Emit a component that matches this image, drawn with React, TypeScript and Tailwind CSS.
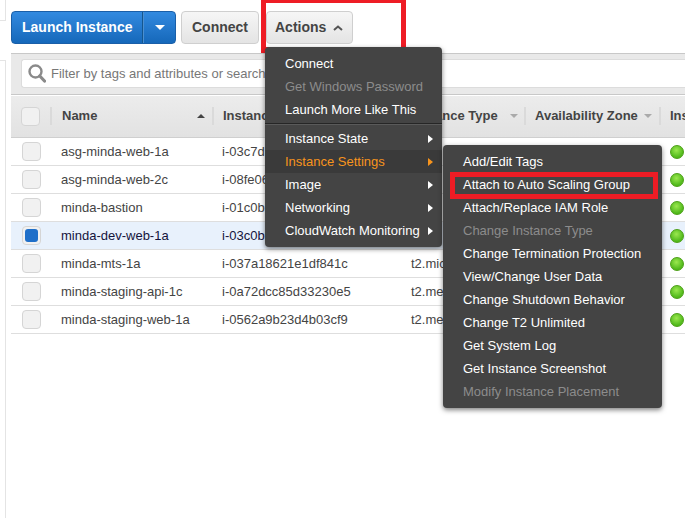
import React from "react";

const rows = [
  { name: "asg-minda-web-1a", id: "i-03c7d", type: "" },
  { name: "asg-minda-web-2c", id: "i-08fe06", type: "" },
  { name: "minda-bastion", id: "i-01c0b", type: "" },
  { name: "minda-dev-web-1a", id: "i-03c0b", type: "", selected: true },
  { name: "minda-mts-1a", id: "i-037a18621e1df841c", type: "t2.micro" },
  { name: "minda-staging-api-1c", id: "i-0a72dcc85d33230e5", type: "t2.medium" },
  { name: "minda-staging-web-1a", id: "i-0562a9b23d4b03cf9", type: "t2.medium" },
];

const actionItems = [
  { label: "Connect" },
  { label: "Get Windows Password", disabled: true },
  { label: "Launch More Like This" },
];

const subMenus = [
  { label: "Instance State" },
  { label: "Instance Settings", active: true },
  { label: "Image" },
  { label: "Networking" },
  { label: "CloudWatch Monitoring" },
];

const settingsItems = [
  { label: "Add/Edit Tags" },
  { label: "Attach to Auto Scaling Group" },
  { label: "Attach/Replace IAM Role" },
  { label: "Change Instance Type", disabled: true },
  { label: "Change Termination Protection" },
  { label: "View/Change User Data" },
  { label: "Change Shutdown Behavior" },
  { label: "Change T2 Unlimited" },
  { label: "Get System Log" },
  { label: "Get Instance Screenshot" },
  { label: "Modify Instance Placement", disabled: true },
];

const Checkbox = ({ checked }: { checked?: boolean }) => (
  <div className="w-[19px] h-[19px] shrink-0 rounded-[4px] border border-[#d5d5d5] bg-[#f1f1f1] flex items-center justify-center">
    {checked && <div className="w-[13px] h-[13px] rounded-[3px] bg-[#1f6fc9]" />}
  </div>
);

const Dot = () => (
  <div className="w-[14px] h-[14px] rounded-full border border-[#4c9f16] bg-[radial-gradient(circle_at_45%_35%,#9be84f,#4fb81a_70%)]" />
);

const SortCaret = ({ dark }: { dark?: boolean }) =>
  dark ? (
    <div className="w-0 h-0 border-x-[4px] border-x-transparent border-b-[4px] border-b-[#444]" />
  ) : (
    <div className="w-0 h-0 border-x-[4px] border-x-transparent border-t-[4px] border-t-[#aaa]" />
  );

const HeaderCell = ({ label, className, caret }: { label: string; className: string; caret?: React.ReactNode }) => (
  <div className={`h-[18px] shrink-0 flex items-center justify-between border-r-2 border-[#dadada] ${className}`}>
    <span className="font-bold text-[13px] text-[#444] whitespace-nowrap">{label}</span>
    {caret}
  </div>
);

const App = () => {
  return (
    <div className="relative w-[685px] h-[518px] overflow-hidden bg-white flex font-['Liberation_Sans',Arial,sans-serif]">
      {/* left rail */}
      <div className="w-[6px] shrink-0 flex flex-col">
        <div className="h-[21px] border-r border-b border-[#e4e4e4]" />
        <div className="mt-[39px] flex-1 border-r border-t border-[#e4e4e4]" />
      </div>

      <div className="flex-1 min-w-0 pl-[5px]">
        {/* toolbar */}
        <div className="h-[53px] pt-[11px] flex items-start">
          <div className="flex h-[33px] w-[165px] rounded-[4px] border border-[#1a5fa8] bg-gradient-to-b from-[#328ae0] to-[#1568ba] text-white font-bold text-[14px]">
            <div className="w-[131px] flex items-center pl-[10px] border-r border-[#14568f]">Launch Instance</div>
            <div className="flex-1 flex items-center justify-center border-l border-[#4b8fd0]">
              <div className="w-0 h-0 border-x-[5px] border-x-transparent border-t-[5px] border-t-white" />
            </div>
          </div>
          <div className="ml-[5px] h-[33px] w-[78px] rounded-[4px] border border-[#cfcfcf] bg-gradient-to-b from-[#f6f6f6] to-[#e4e4e4] flex items-center justify-center font-bold text-[14px] text-[#444]">
            Connect
          </div>
          <div className="ml-[7px] h-[33px] w-[87px] rounded-[4px] border border-[#cfcfcf] bg-gradient-to-b from-[#f6f6f6] to-[#e4e4e4] flex items-center pl-[8px] gap-[7px] font-bold text-[14px] text-[#444]">
            Actions
            <svg width="10" height="6" viewBox="0 0 10 6">
              <path d="M1 5 L5 1.5 L9 5" fill="none" stroke="#555" strokeWidth="2" />
            </svg>
          </div>
        </div>

        {/* filter bar */}
        <div className="h-[42px] border-y border-[#c8c8c8] bg-[#e9e9e9] pl-[10px] pt-[5px]">
          <div className="h-[29px] rounded-l-[3px] border-y border-l border-[#dcdcdc] bg-white flex items-center pl-[6px] gap-[5px]">
            <svg width="18" height="19" viewBox="0 0 18 19" className="shrink-0">
              <circle cx="7.5" cy="7.5" r="6" fill="none" stroke="#8a8a8a" strokeWidth="2.4" />
              <path d="M11.8 12 L16.5 17" stroke="#8a8a8a" strokeWidth="3.2" strokeLinecap="round" />
            </svg>
            <span className="text-[13px] text-[#777] whitespace-nowrap">Filter by tags and attributes or search by keyword</span>
          </div>
        </div>

        {/* table head */}
        <div className="h-[43px] border-t border-white bg-gradient-to-b from-[#ececec] to-[#e2e2e2] border-b border-b-[#cfcfcf] pb-[1px] flex items-center overflow-hidden">
          <div className="w-[41px] h-[18px] shrink-0 pl-[10px] flex items-center border-r-2 border-[#dadada]">
            <Checkbox />
          </div>
          <HeaderCell label="Name" className="w-[162px] pl-[10px] pr-[7px]" caret={<SortCaret dark />} />
          <HeaderCell label="Instance ID" className="w-[187px] pl-[9px]" />
          <HeaderCell label="Instance Type" className="w-[125px] pl-[11px] pr-[6px]" caret={<SortCaret />} />
          <HeaderCell label="Availability Zone" className="w-[135px] pl-[9px] pr-[7px]" caret={<SortCaret />} />
          <span className="ml-[9px] font-bold text-[13px] text-[#444] whitespace-nowrap">Instance State</span>
        </div>

        {/* rows */}
        {rows.map((row) => (
          <div
            key={row.name}
            className={`h-[28px] flex items-center border-b border-[#dedede] text-[13px] overflow-hidden ${
              row.selected ? "bg-[#e8f1fc] text-[#14143c]" : "bg-white text-[#444]"
            }`}
          >
            <div className="w-[50px] shrink-0 pl-[11px]">
              <Checkbox checked={row.selected} />
            </div>
            <div className="w-[161px] shrink-0 whitespace-nowrap">{row.name}</div>
            <div className="w-[189px] shrink-0 whitespace-nowrap">{row.id}</div>
            <div className="w-[259px] shrink-0 whitespace-nowrap">{row.type}</div>
            <Dot />
          </div>
        ))}
      </div>

      {/* red callout on Actions */}
      <div className="absolute left-[261px] top-[-2px] w-[145px] h-[55px] border-[5px] border-b-[6px] border-[#ee1c25]" />

      {/* Actions menu */}
      <div className="absolute left-[265px] top-[47px] w-[177px] h-[200px] rounded-[4px] bg-[#444] shadow-[0_2px_5px_rgba(0,0,0,0.5)] text-[13px] text-white pt-[5px]">
        {actionItems.map((item) => (
          <div key={item.label} className={`h-[23px] flex items-center pl-[20px] ${item.disabled ? "text-[#8c8c8c]" : ""}`}>
            {item.label}
          </div>
        ))}
        <div className="mt-[2px] mb-[2px] border-t border-b border-t-[#262626] border-b-[#5a5a5a]" />
        {subMenus.map((item) => (
          <div
            key={item.label}
            className={`h-[23px] flex items-center justify-between pl-[20px] pr-[9px] ${
              item.active ? "bg-[#3a3a3a] text-[#f7941d]" : ""
            }`}
          >
            {item.label}
            <div
              className={`w-0 h-0 border-y-[4px] border-y-transparent border-l-[5px] ${
                item.active ? "border-l-[#f7941d]" : "border-l-white"
              }`}
            />
          </div>
        ))}
      </div>

      {/* Instance Settings submenu */}
      <div className="absolute left-[443px] top-[145px] w-[219px] h-[263px] rounded-[4px] bg-[#444] shadow-[0_2px_5px_rgba(0,0,0,0.5)] text-[13px] text-white pt-[5px]">
        {settingsItems.map((item) => (
          <div key={item.label} className={`h-[23px] flex items-center pl-[20px] whitespace-nowrap ${item.disabled ? "text-[#8c8c8c]" : ""}`}>
            {item.label}
          </div>
        ))}
      </div>

      {/* red callout on Attach to Auto Scaling Group */}
      <div className="absolute left-[450px] top-[172px] w-[208px] h-[27px] border-[5px] border-[#ee1c25]" />
    </div>
  );
};

export default App;
